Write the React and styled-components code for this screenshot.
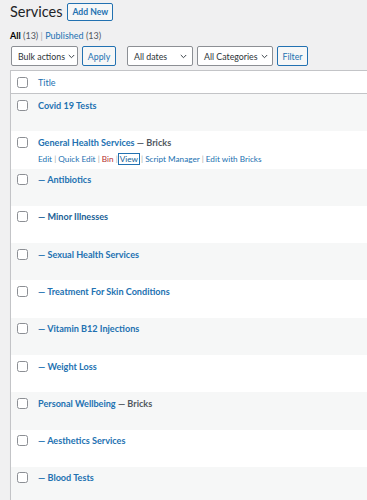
import styled, { createGlobalStyle } from "styled-components";

const GlobalStyle = createGlobalStyle`
  html, body {
    margin: 0;
    padding: 0;
    background: #f0f0f1;
    overflow: hidden;
  }
  body {
    font-family: Lato, "Noto Sans", sans-serif;
    font-size: 9px;
    color: #3c434a;
  }
`;

const posts = [
  { title: "Covid 19 Tests" },
  { title: "General Health Services", state: "Bricks", actions: true },
  { title: "Antibiotics", child: true },
  { title: "Minor Illnesses", child: true, hover: true },
  { title: "Sexual Health Services", child: true },
  { title: "Treatment For Skin Conditions", child: true },
  { title: "Vitamin B12 Injections", child: true },
  { title: "Weight Loss", child: true },
  { title: "Personal Wellbeing", state: "Bricks" },
  { title: "Aesthetics Services", child: true },
  { title: "Blood Tests", child: true },
];

const App = () => {
  return (
    <>
      <GlobalStyle />
      <Wrap>
        <Heading>
          <h1>Services</h1>
          <AddNew>Add New</AddNew>
        </Heading>
        <SubSub>
          <Current>All</Current> <Count>(13)</Count> <Sep>|</Sep>{" "}
          <LinkText>Published</LinkText> <Count>(13)</Count>
        </SubSub>
        <TableNav>
          <Select w={67}>Bulk actions</Select>
          <Button w={34}>Apply</Button>
          <Select w={66} gap={7}>All dates</Select>
          <Select w={76}>All Categories</Select>
          <Button w={31}>Filter</Button>
        </TableNav>
        <Table>
          <HeadRow>
            <Check />
            <HeadTitle>Title</HeadTitle>
          </HeadRow>
          {posts.map((p, i) => (
            <Row key={p.title} striped={i % 2 === 0}>
              <Check />
              <Cell>
                <RowTitle>
                  <TitleLink hover={p.hover}>
                    {p.child ? "— " : ""}
                    {p.title}
                  </TitleLink>
                  {p.state && <State> — {p.state}</State>}
                </RowTitle>
                {p.actions && (
                  <Actions>
                    <ActionLink>Edit</ActionLink> <Bar>|</Bar>{" "}
                    <ActionLink>Quick Edit</ActionLink> <Bar>|</Bar>{" "}
                    <ActionLink danger>Bin</ActionLink> <Bar>|</Bar>
                    <Focused>View</Focused>
                    <Bar>|</Bar> <ActionLink>Script Manager</ActionLink>{" "}
                    <Bar>|</Bar> <ActionLink>Edit with Bricks</ActionLink>
                  </Actions>
                )}
              </Cell>
            </Row>
          ))}
        </Table>
      </Wrap>
    </>
  );
};

export default App;

const Chevron = () => (
  <svg width="7" height="5" viewBox="0 0 7 5">
    <path d="M0.8 1 L3.5 3.7 L6.2 1" fill="none" stroke="#3c434a" strokeWidth="1" />
  </svg>
);

const Select = ({ children, w, gap }) => (
  <SelectBox w={w} gap={gap}>
    <span>{children}</span>
    <Chevron />
  </SelectBox>
);

const Wrap = styled.div`
  padding-left: 10px;
`;

const Heading = styled.div`
  display: flex;
  align-items: center;
  height: 24px;
  gap: 5px;
  h1 {
    margin: 0;
    font-size: 14.5px;
    font-weight: 400;
    color: #1d2327;
    line-height: 20px;
  }
`;

const AddNew = styled.div`
  box-sizing: border-box;
  height: 18px;
  padding: 0 4px;
  display: flex;
  align-items: center;
  border: 1px solid #2271b1;
  border-radius: 2px;
  background: #f6f7f7;
  color: #2271b1;
  font-size: 8.6px;
  font-weight: 700;
`;

const SubSub = styled.div`
  margin-top: 5px;
  height: 14px;
  line-height: 14px;
  font-size: 9px;
  color: #646970;
`;

const Current = styled.span`
  color: #000;
  font-weight: 700;
`;

const Count = styled.span`
  color: #50575e;
`;

const Sep = styled.span`
  color: #a7aaad;
`;

const LinkText = styled.span`
  color: #2271b1;
`;

const TableNav = styled.div`
  display: flex;
  align-items: center;
  gap: 4px;
  margin-top: 3px;
  margin-left: 1px;
  height: 20px;
`;

const SelectBox = styled.div`
  box-sizing: border-box;
  width: ${(p) => p.w}px;
  height: 20px;
  margin-left: ${(p) => p.gap || 0}px;
  padding: 0 5px 0 6px;
  display: flex;
  align-items: center;
  justify-content: space-between;
  gap: 3px;
  background: #fff;
  border: 1px solid #8c8f94;
  border-radius: 2px;
  color: #2c3338;
  font-size: 8.8px;
  white-space: nowrap;
  svg {
    flex: none;
  }
`;

const Button = styled.div`
  box-sizing: border-box;
  width: ${(p) => p.w}px;
  height: 20px;
  display: flex;
  align-items: center;
  justify-content: center;
  background: #f6f7f7;
  border: 1px solid #2271b1;
  border-radius: 2px;
  color: #2271b1;
  font-size: 8.8px;
`;

const Table = styled.div`
  margin-top: 4px;
  width: 400px;
  background: #fff;
  border: 1px solid #c3c4c7;
  box-shadow: 0 1px 1px rgba(0, 0, 0, 0.04);
`;

const HeadRow = styled.div`
  display: flex;
  align-items: center;
  height: 22px;
  border-bottom: 1px solid #c3c4c7;
`;

const Check = styled.span`
  box-sizing: border-box;
  flex: none;
  width: 11px;
  height: 11px;
  margin-left: 6px;
  border: 1px solid #8c8f94;
  border-radius: 2.5px;
  background: #fff;
`;

const HeadTitle = styled.span`
  margin-left: 10px;
  color: #2271b1;
  font-size: 9px;
`;

const Row = styled.div`
  display: flex;
  align-items: flex-start;
  box-sizing: border-box;
  height: 37.3px;
  padding-top: 5.5px;
  background: ${(p) => (p.striped ? "#f6f7f7" : "#fff")};
`;

const Cell = styled.div`
  margin-left: 10px;
`;

const RowTitle = styled.div`
  line-height: 12px;
  font-size: 9.1px;
  font-weight: 700;
`;

const TitleLink = styled.span`
  color: ${(p) => (p.hover ? "#1a5f96" : "#2271b1")};
`;

const State = styled.span`
  color: #50575e;
`;

const Actions = styled.div`
  margin-top: 4px;
  line-height: 12px;
  font-size: 8.2px;
  color: #a7aaad;
  white-space: nowrap;
`;

const ActionLink = styled.span`
  color: ${(p) => (p.danger ? "#b32d2e" : "#2271b1")};
`;

const Bar = styled.span`
  color: #a7aaad;
`;

const Focused = styled.span`
  color: #135e96;
  margin: 0 2px 0 1px;
  padding: 0 1px;
  outline: 1px solid #2271b1;
  box-shadow: 0 0 0 1px rgba(34, 113, 177, 0.25);
`;
